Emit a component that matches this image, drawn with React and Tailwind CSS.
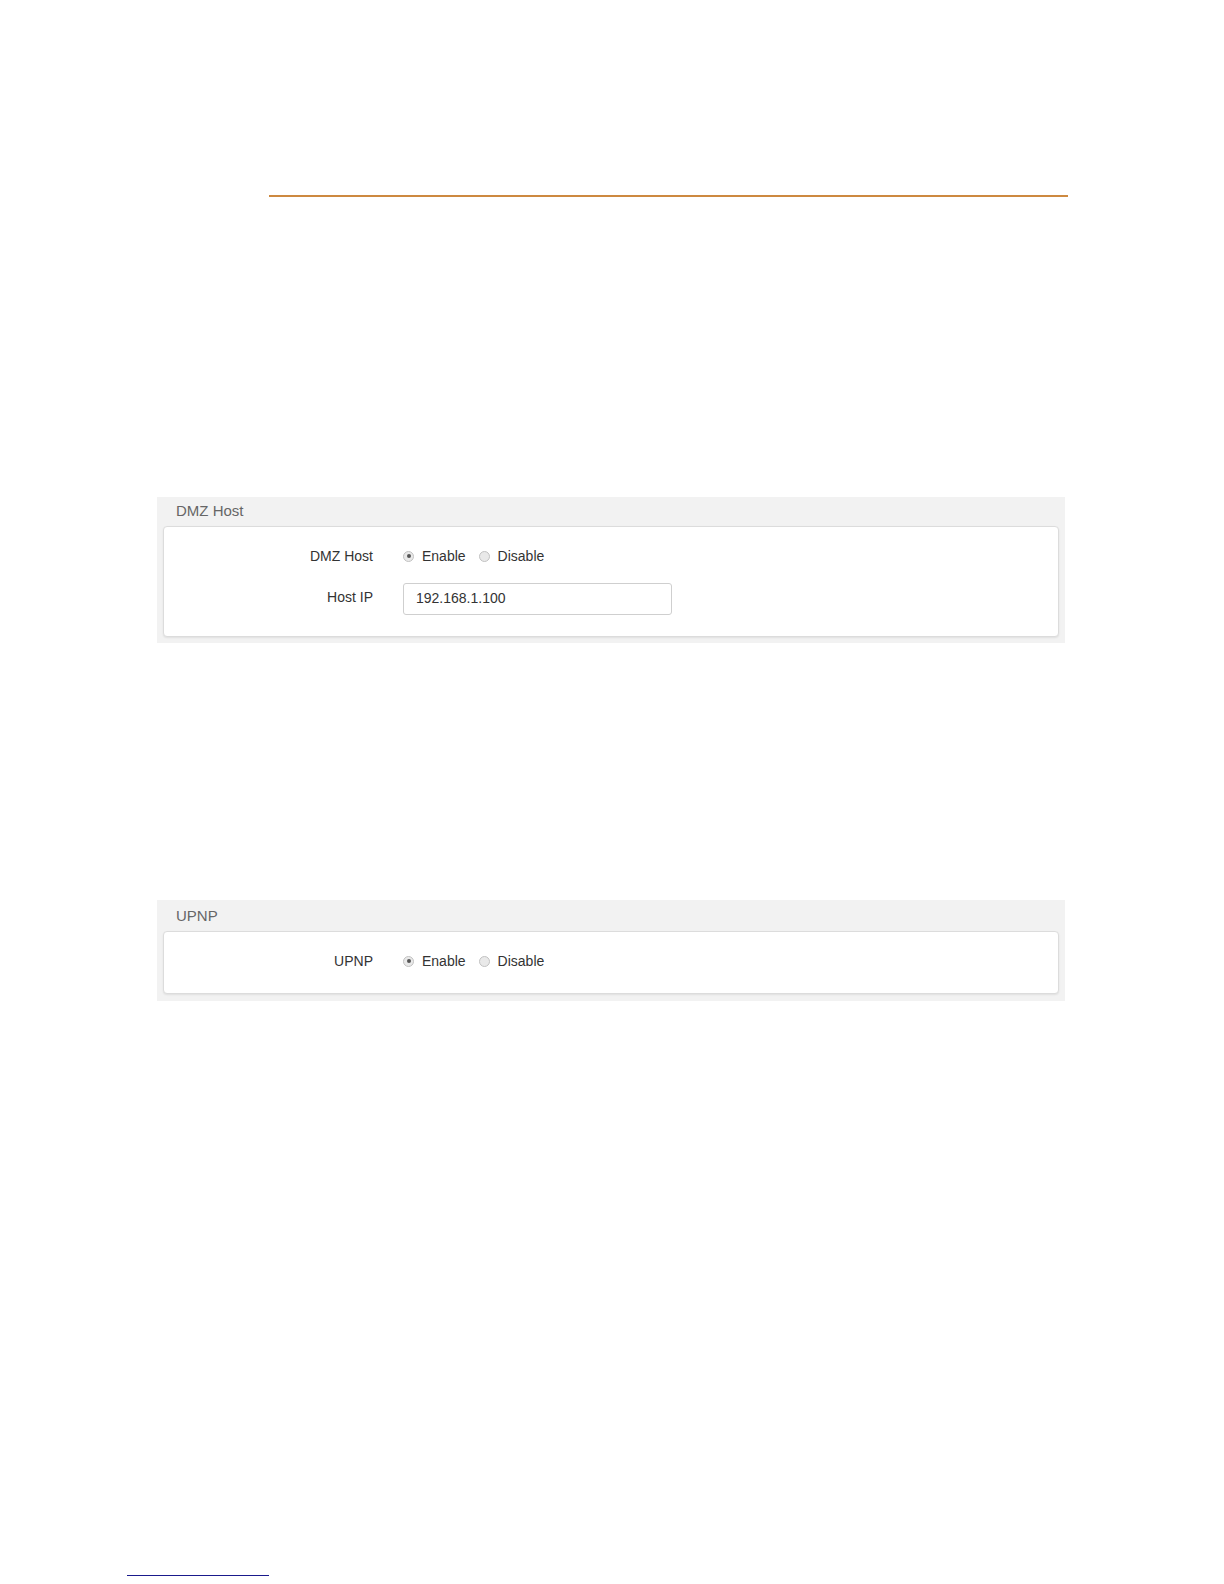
import React from 'react';

function Radio({ checked }) {
  return (
    <span className="w-[11px] h-[11px] rounded-full border border-[#c2c2c2] bg-[#e9e9e9] flex items-center justify-center shrink-0">
      {checked && <span className="w-[4px] h-[4px] rounded-full bg-[#555]" />}
    </span>
  );
}

function RadioGroup() {
  return (
    <div className="flex items-center h-[20px]">
      <Radio checked />
      <span className="ml-[8px] text-[#333]">Enable</span>
      <span className="ml-[13px]"><Radio /></span>
      <span className="ml-[8px] text-[#333]">Disable</span>
    </div>
  );
}

function Row({ label, children, className = '', labelClass = '' }) {
  return (
    <div className={`flex items-center ${className}`}>
      <div className={`w-[209px] text-right text-[#333] ${labelClass}`}>{label}</div>
      <div className="ml-[30px]">{children}</div>
    </div>
  );
}

function Panel({ title, children, titleClass, innerClass, className = '' }) {
  return (
    <div className={`ml-[157px] w-[908px] bg-[#f2f2f2] px-[6px] ${className}`}>
      <div className={`flex items-center pl-[13px] text-[15px] text-[#666] ${titleClass}`}>{title}</div>
      <div className={`bg-white border border-[#dcdcdc] rounded-[4px] shadow-[0_1px_2px_rgba(0,0,0,0.08)] ${innerClass}`}>
        {children}
      </div>
    </div>
  );
}

export default function App() {
  return (
    <div className="w-[1224px] h-[1584px] bg-white text-[14px] flex flex-col" style={{ fontFamily: '"Liberation Sans", Arial, sans-serif' }}>
      <div className="mt-[195px] ml-[269px] w-[799px] h-[2px] bg-[#cd8940]" />

      <div className="mt-[300px]">
        <Panel title="DMZ Host" className="pb-[6px]" titleClass="h-[29px]" innerClass="pt-[19px] h-[111px]">
          <Row label="DMZ Host" className="h-[20px]">
            <RadioGroup />
          </Row>
          <Row label="Host IP" className="mt-[17px]" labelClass="pb-[4px]">
            <div className="w-[269px] h-[32px] border border-[#cfcfcf] rounded-[3px] flex items-center pl-[12px] pb-[2px] text-[#333]">
              192.168.1.100
            </div>
          </Row>
        </Panel>
      </div>

      <div className="mt-[257px]">
        <Panel title="UPNP" className="pb-[7px]" titleClass="h-[31px] pt-[2px]" innerClass="pt-[19px] h-[63px]">
          <Row label="UPNP" className="h-[20px]">
            <RadioGroup />
          </Row>
        </Panel>
      </div>

      <div className="mt-auto mb-[8px] ml-[127px] w-[142px] h-[1px] bg-[#1a1a8c]" />
    </div>
  );
}
